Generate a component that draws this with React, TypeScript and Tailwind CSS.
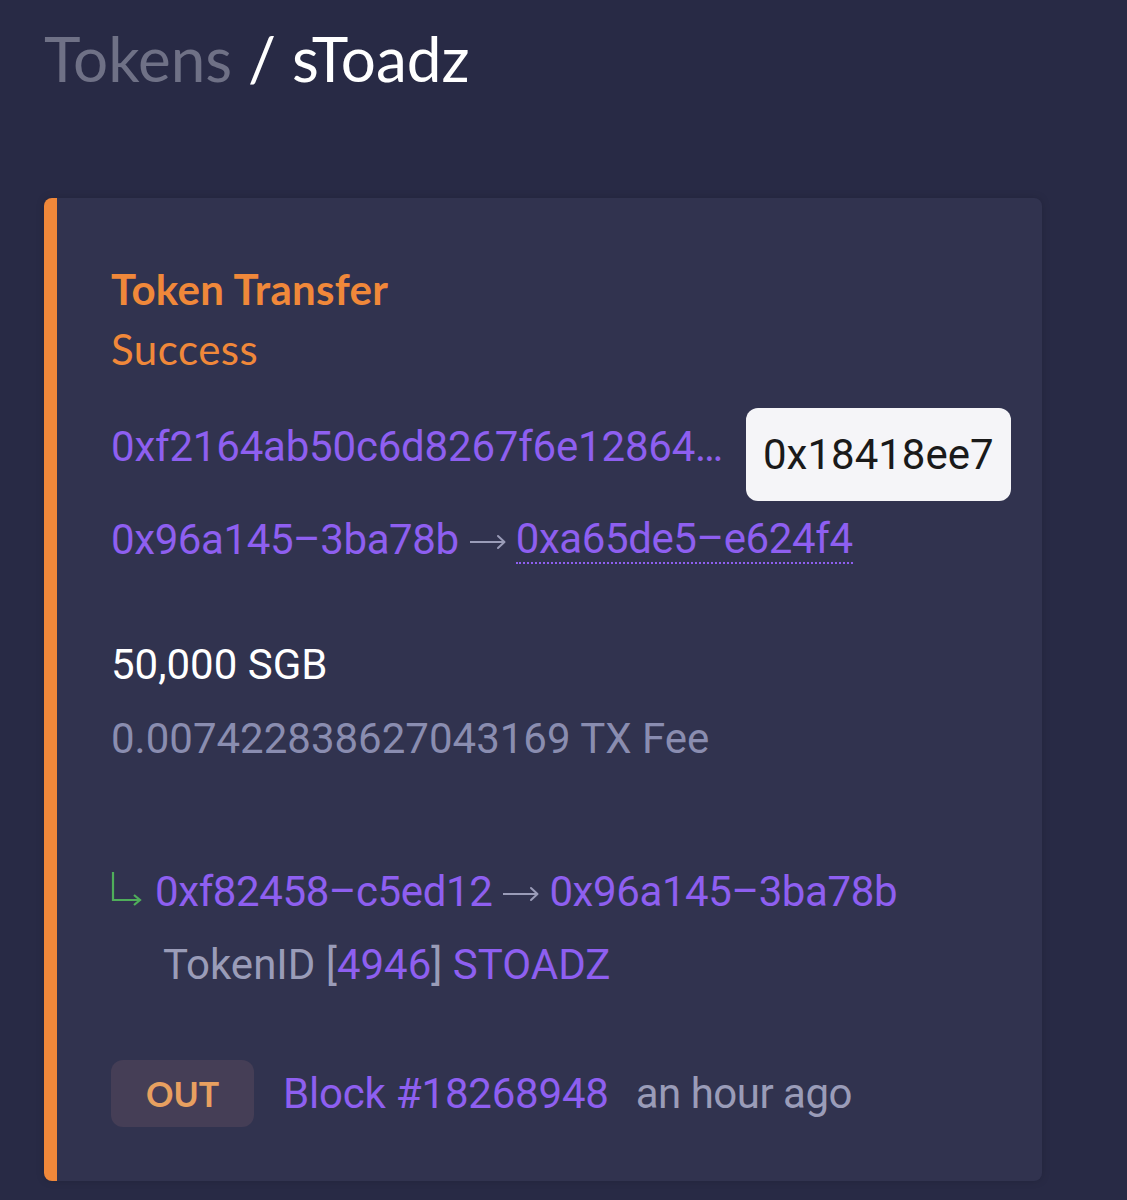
import React from "react";

const body = { fontFamily: "Roboto, 'Liberation Sans', sans-serif" };
const head = { fontFamily: "Lato, 'Noto Sans', sans-serif" };

function Arrow() {
  return (
    <span className="mx-[10px] flex items-center" aria-label="→">
      <svg width="37" height="16" viewBox="0 0 37 16" className="mt-[3px]">
        <path d="M1 8 H35" fill="none" stroke="#9a9cb8" strokeWidth="2" />
        <path d="M29 2 L35.5 8 L29 14" fill="none" stroke="#9a9cb8" strokeWidth="2" strokeLinecap="round" strokeLinejoin="round" />
      </svg>
    </span>
  );
}

export default function App() {
  return (
    <div className="min-h-[1200px] w-full bg-[#282a45] px-[44px] pt-[18px]" style={body}>
      <h1 className="text-[62px] leading-[80px]" style={head}>
        <span className="text-[#6f7186]">Tokens</span>
        <span className="text-white"> / sToadz</span>
      </h1>

      <div className="mt-[100px] w-[998px] h-[983px] rounded-lg bg-[#31334f] border-l-[13px] border-[#f0883a] pl-[54px] pt-[63px] shadow-[0_0_8px_rgba(0,0,0,0.15)]">
        <div className="text-[42px] leading-[56px] font-bold text-[#f0883a] tracking-[0.3px]" style={head}>Token Transfer</div>
        <div className="text-[42px] leading-[56px] text-[#f0883a] mt-[4px] tracking-[0.5px]" style={head}>Success</div>

        <div className="mt-[31px] flex items-center gap-[23px]">
          <span className="pb-[16px] text-[42px] leading-[56px] text-[#8e5ff0] tracking-[-0.2px]">0xf2164ab50c6d8267f6e12864…</span>
          <span className="flex h-[93px] items-center rounded-xl bg-[#f5f5f8] px-[17px] text-[42px] leading-[56px] text-[#1a1a1a]">
            0x18418ee7
          </span>
        </div>

        <div className="mt-[11px] flex items-center text-[42px] leading-[56px] tracking-[-0.4px]">
          <span className="text-[#8e5ff0]">0x96a145–3ba78b</span>
          <Arrow />
          <span className="text-[#8e5ff0] leading-[46px] border-b-[2px] border-dotted border-[#8e5ff0]">0xa65de5–e624f4</span>
        </div>

        <div className="mt-[69px] text-[42px] leading-[56px] text-white">50,000 SGB</div>
        <div className="mt-[18px] text-[42px] leading-[56px] text-[#8a8db0]">0.007422838627043169 TX Fee</div>

        <div className="mt-[97px] flex items-center text-[42px] leading-[56px] tracking-[-0.4px]">
          <svg width="40" height="40" viewBox="0 0 40 40" className="mr-[5px] -mt-[8px] -ml-[1px]">
            <path d="M3 4 V32 H30" fill="none" stroke="#4fae5a" strokeWidth="2.2" />
            <path d="M24 27 L30 32 L24 37" fill="none" stroke="#4fae5a" strokeWidth="2.2" />
          </svg>
          <span className="text-[#8e5ff0]">0xf82458–c5ed12</span>
          <Arrow />
          <span className="text-[#8e5ff0]">0x96a145–3ba78b</span>
        </div>

        <div className="mt-[17px] pl-[52px] text-[42px] leading-[56px]">
          <span className="text-[#9a9cb8]">TokenID [</span>
          <span className="text-[#8e5ff0]">4946</span>
          <span className="text-[#9a9cb8]">] </span>
          <span className="text-[#8e5ff0]">STOADZ</span>
        </div>

        <div className="mt-[67px] flex items-center">
          <span className="flex h-[67px] w-[143px] items-center justify-center rounded-xl bg-[#453e56] text-[34px] font-bold text-[#e8a060]" style={head}>
            OUT
          </span>
          <span className="ml-[29px] text-[42px] leading-[56px] text-[#8e5ff0] tracking-[-0.2px]">Block #18268948</span>
          <span className="ml-[27px] text-[42px] leading-[56px] text-[#9a9cb8] tracking-[-0.5px]">an hour ago</span>
        </div>
      </div>
    </div>
  );
}
